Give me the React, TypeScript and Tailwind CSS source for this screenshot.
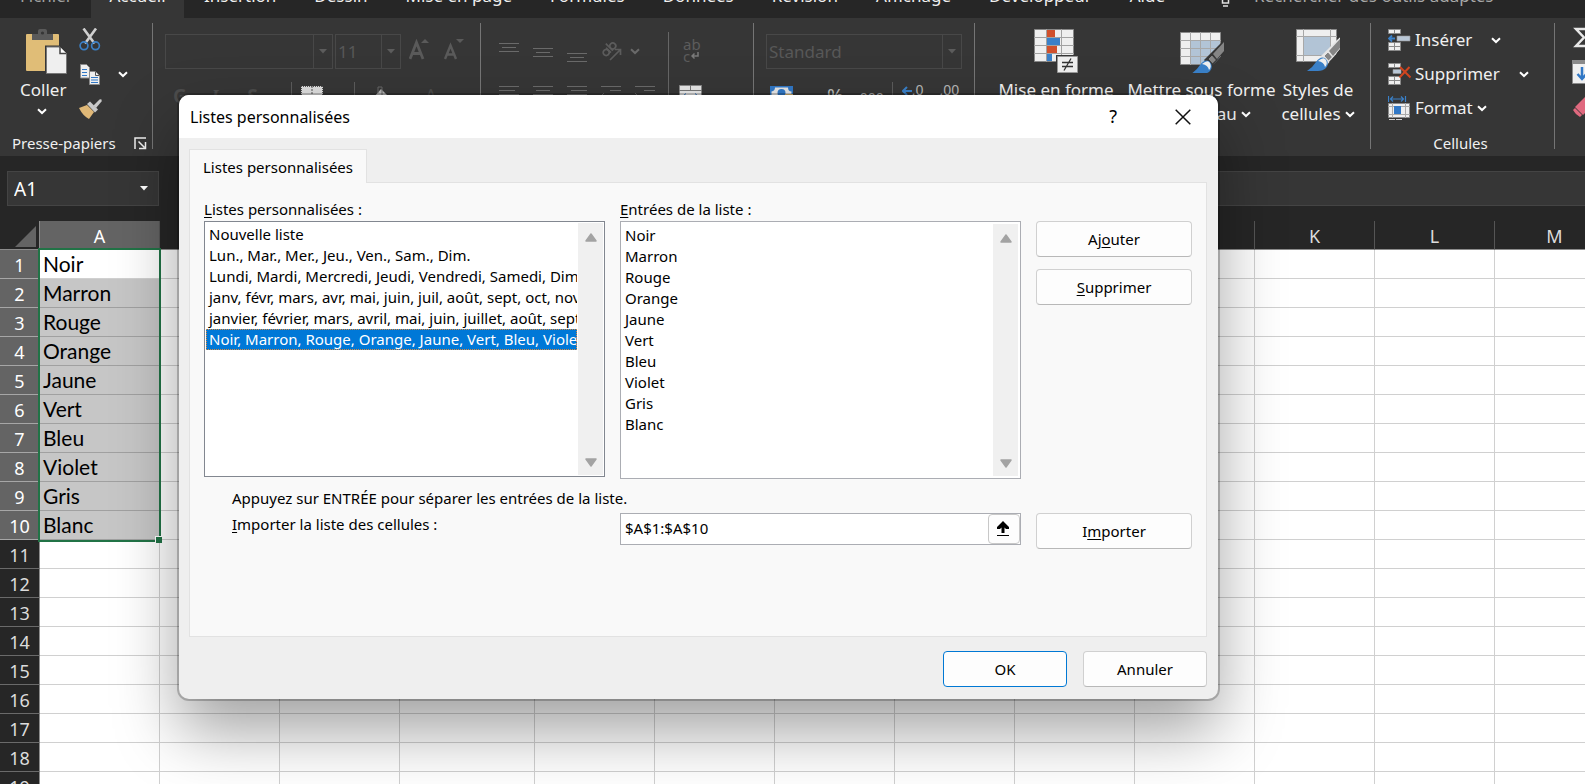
import React from "react";

const TABS = ["Insertion", "Dessin", "Mise en page", "Formules", "Données", "Révision", "Affichage", "Développeur", "Aide"];
const COLUMNS = ["A", "B", "C", "D", "E", "F", "G", "H", "I", "J", "K", "L", "M"];
const ROWS = Array.from({ length: 19 }, (_, i) => i + 1);
const COLORS = ["Noir", "Marron", "Rouge", "Orange", "Jaune", "Vert", "Bleu", "Violet", "Gris", "Blanc"];
const LISTS = [
  "Nouvelle liste",
  "Lun., Mar., Mer., Jeu., Ven., Sam., Dim.",
  "Lundi, Mardi, Mercredi, Jeudi, Vendredi, Samedi, Dimanche",
  "janv, févr, mars, avr, mai, juin, juil, août, sept, oct, nov, déc",
  "janvier, février, mars, avril, mai, juin, juillet, août, septembre, octobre",
  "Noir, Marron, Rouge, Orange, Jaune, Vert, Bleu, Violet, Gris, Blanc",
];

function Chevron({ className = "text-white" }: { className?: string }) {
  return (
    <svg width="10" height="7" viewBox="0 0 10 7" className={className} aria-hidden="true">
      <path d="M1 1.2 5 5l4-3.8" fill="none" stroke="currentColor" strokeWidth="2" />
    </svg>
  );
}

function Triangle({ className }: { className: string }) {
  return (
    <svg width="8" height="5" viewBox="0 0 8 5" className={className} aria-hidden="true">
      <path d="M0 0h8L4 4.6z" fill="currentColor" />
    </svg>
  );
}

function Divider() {
  return <div className="mt-[5px] h-[126px] w-px shrink-0 bg-[#757575]" />;
}

function PasteIcon() {
  return (
    <svg width="42" height="46" viewBox="0 0 42 46" aria-hidden="true">
      <rect x="0" y="5" width="33" height="37" rx="1" fill="#e0bd77" />
      <path d="M6 11V5h6V2q0-2 2-2h5q2 0 2 2v3h6v6z" fill="#5a5a5a" />
      <circle cx="16.500" cy="4" r="1.600" fill="#363636" />
      <path d="M19 16.500h15l7 7V45H19z" fill="#363636" />
      <path d="M20.500 18H34l6.500 6.500V44.500h-20z" fill="#efefef" stroke="#777" />
      <path d="M34 18v6.500h6.500" fill="#fff" stroke="#444" strokeWidth="1.500" />
    </svg>
  );
}

function CutIcon() {
  return (
    <svg width="22" height="23" viewBox="0 0 22 23" aria-hidden="true">
      <path d="m4.500.500 11 15M17 .500l-11 15" stroke="#cfcfcf" strokeWidth="2.600" />
      <g fill="none" stroke="#3b7fc4" strokeWidth="1.700">
        <circle cx="5" cy="17.800" r="3.900" />
        <circle cx="16.500" cy="17.800" r="3.900" />
      </g>
    </svg>
  );
}

function CopyIcon() {
  return (
    <svg width="22" height="23" viewBox="0 0 22 23" aria-hidden="true">
      <g fill="#efefef" stroke="#8a8a8a">
        <path d="M1.500 1.500h6l3 3V15h-9z" />
        <path d="M10.500 8.500h6l4 4v9h-10z" />
      </g>
      <path d="M3 6.500h5M3 9.500h5M3 12.500h5M12 14.500h7M12 17h7M12 19.500h7" stroke="#3178c6" strokeWidth="1.200" />
      <path d="M16.500 8.500v4h4" fill="none" stroke="#555" />
    </svg>
  );
}

function BrushIcon() {
  return (
    <svg width="24" height="22" viewBox="0 0 24 22" aria-hidden="true">
      <path d="m0 10 8-3 7 7-5 7q-6-3-10-11z" fill="#e0b877" />
      <path d="m8 6 3-2.500 8 8L16 14.500z" fill="#c9c9c9" />
      <path d="m14.500 7.500 6-6q3-1 2 2l-5.500 6.500z" fill="#c9c9c9" />
    </svg>
  );
}

function LauncherIcon() {
  return (
    <svg width="13" height="13" viewBox="0 0 13 13" fill="none" stroke="#f0f0f0" strokeWidth="1.500" aria-hidden="true">
      <path d="M1 12V1h11M4.500 4.500l6 6M11.500 5v6.500H5" />
    </svg>
  );
}

function Grow({ down }: { down?: boolean }) {
  return (
    <svg width="21" height="22" viewBox="0 0 21 22" aria-hidden="true" className="text-[#5a5a5a]">
      {down ? (
        <>
          <path d="m1 20 5.500-13.500L12 20M3 15.500h7" fill="none" stroke="currentColor" strokeWidth="2.400" />
          <path d="M12 0h8l-4 4z" fill="currentColor" />
        </>
      ) : (
        <>
          <path d="M1 20 7.500 3.500 14 20M3.500 14.500h8" fill="none" stroke="currentColor" strokeWidth="2.800" />
          <path d="M12 4h8l-4-4z" fill="currentColor" />
        </>
      )}
    </svg>
  );
}

function AlignIcon({ shift }: { shift: string }) {
  return (
    <svg width="20" height="22" viewBox="0 0 20 22" stroke="#6a6a6a" aria-hidden="true">
      <path d={shift} />
    </svg>
  );
}

function Orientation() {
  return (
    <svg width="22" height="22" viewBox="0 0 22 22" fill="none" stroke="#5c5c5c" strokeWidth="1.700" aria-hidden="true">
      <g transform="rotate(-45 8 9)">
        <circle cx="3.500" cy="9.500" r="3" />
        <path d="M6.800 6v7M9.500 3v10" />
        <circle cx="12.800" cy="9.500" r="3" />
      </g>
      <path d="M9 20 19 10M14 9.500h5.500V15" />
    </svg>
  );
}

function MergeIcon() {
  return (
    <svg width="23" height="22" viewBox="0 0 23 22" aria-hidden="true">
      <path d="M.500.500h22v21H.500z" fill="#e6e6e6" stroke="#888" />
      <path d="M0 5.500h23M11.500 0v5.500" stroke="#777" />
      <path d="M4 11h15M7 8.500 4 11l3 2.500M16 8.500l3 2.500-3 2.500" fill="none" stroke="#3178c6" />
    </svg>
  );
}

function ConditionalIcon() {
  return (
    <svg width="44" height="44" viewBox="0 0 44 44" aria-hidden="true">
      <path d="M.500.500h39v32H.500z" fill="#efefef" stroke="#888" />
      <path d="M0 8.500h40M0 16.500h40M0 24.500h40M12.500 0v33M27.500 0v33" stroke="#a2a2a2" />
      <path d="M13 1h8v7h-8zM13 17h10v7H13z" fill="#d0502c" />
      <path d="M13 9h13v7H13zM13 25h5v7h-5z" fill="#3a80c8" />
      <path d="M22 26h22v18H22z" fill="#363636" />
      <path d="M23.500 27.500h20v16h-20z" fill="#efefef" stroke="#999" />
      <path d="M28 33.500h11M28 37.500h11M37 29.500l-7 12" stroke="#333" strokeWidth="1.300" />
    </svg>
  );
}

function StyleIcon({ grid }: { grid?: boolean }) {
  return (
    <svg width="44" height="44" viewBox="0 0 44 44" aria-hidden="true">
      <g transform={grid ? "translate(0 3)" : undefined}>
        <path d="M.500.500h40v32H.500z" fill="#efefef" stroke="#8a8a8a" />
        {grid ? (
          <>
            <path d="M10 9h30v23H10z" fill="#b2c4d6" />
            <path d="M0 8.500h41M0 16.500h41M0 24.500h41M10.500 0v33M20.500 0v33M30.500 0v33" stroke="#a8a8a8" />
          </>
        ) : (
          <>
            <path d="M8 8h26v18H8z" fill="#b2c4d6" />
            <path d="M0 7.500h41M0 26.500h41M7.500 0v33M34.500 0v33" stroke="#a8a8a8" />
          </>
        )}
        <path d="M44 8 24 28l7 8 13-16z" fill={grid ? "#363636" : "#e6e6e6"} />
        <path d="M41 11l3-3v13l-11 12h11V7z" fill="#363636" />
        <path d="M44 10 33 22l4 5 7-8z" fill="#858585" />
        <path d="m32 23 4.500 5-4 4-4.500-5z" fill="#858585" stroke={grid ? "#363636" : "#e6e6e6"} />
        <path d="M11 42q6-4 9-9 4-6 9-4 5 5 1 10-3 3-8 3z" fill="#3a80c8" />
        <path d="M22 32q6-5 8-1t-1 7q-1-5-7-6z" fill="#efefef" />
      </g>
    </svg>
  );
}

function InsertIcon() {
  return (
    <svg width="23" height="23" viewBox="0 0 23 23" aria-hidden="true">
      <path d="M.500.500h12v4H.500zM.500 13.500h12v8H.500z" fill="#efefef" stroke="#8a8a8a" />
      <path d="M6.500 1v3.500M6.500 14v7.500M0 17.500h13" stroke="#8a8a8a" />
      <path d="M9 7h13v5H9z" fill="#b9c7d6" stroke="#999" strokeWidth=".6" />
      <path d="M7 9.500H1M4 6.500l-3 3 3 3" fill="none" stroke="#3a80c8" strokeWidth="1.800" />
    </svg>
  );
}

function DeleteIcon() {
  return (
    <svg width="23" height="23" viewBox="0 0 23 23" aria-hidden="true">
      <path d="M.500.500h12v4H.500zM.500 13.500h12v8H.500z" fill="#efefef" stroke="#8a8a8a" />
      <path d="M6.500 1v3.500M6.500 14v7.500M0 17.500h13" stroke="#8a8a8a" />
      <path d="M5 6.500h8v4H5z" fill="#b9c7d6" stroke="#999" strokeWidth=".6" />
      <path d="m12 4 10.500 10.500M21.500 4 11.500 14.500" stroke="#d0451f" strokeWidth="2" />
    </svg>
  );
}

function FormatIcon() {
  return (
    <svg width="23" height="25" viewBox="0 0 23 25" aria-hidden="true">
      <path d="M.500 0v6M17.500 0v6M2 3h14M5 .500 2.500 3 5 5.500M13 .500 15.500 3 13 5.500" fill="none" stroke="#3a80c8" strokeWidth="1.200" />
      <path d="M.500 7.500h21v14H.500z" fill="#efefef" stroke="#8a8a8a" />
      <path d="M4.500 7v15M17.500 7v15M0 10.500h22M0 18.500h22" stroke="#aaa" />
      <path d="M6 10h7v8H6z" fill="#3178c6" />
      <path d="M1 23.500h6M8 23.500h6" stroke="#cfcfcf" />
    </svg>
  );
}

function Combo({ label, value, width }: { label: string; value: string; width: string }) {
  return (
    <div className={`relative h-[35px] border border-[#484848] ${width}`}>
      <select aria-label={label} defaultValue={value} className="h-full w-full appearance-none bg-transparent pl-[2px] text-[17px] text-[#585858] outline-none">
        <option>{value}</option>
      </select>
      <span className="pointer-events-none absolute inset-y-0 right-0 flex w-[19px] items-center justify-center border-l border-[#484848]">
        <Triangle className="text-[#5c5c5c]" />
      </span>
    </div>
  );
}

function BigButton({ icon, lines, width }: { icon: React.ReactNode; lines: [string, string]; width: string }) {
  return (
    <button className={`flex shrink-0 flex-col items-center pt-[11px] whitespace-nowrap ${width}`}>
      {icon}
      <span className="mt-[5px] leading-6">{lines[0]}</span>
      <span className="flex items-center gap-1 leading-6">
        {lines[1]}
        <Chevron />
      </span>
    </button>
  );
}

function CellButton({ icon, text, gap }: { icon: React.ReactNode; text: string; gap: string }) {
  return (
    <button className={`flex h-[34px] items-center ${gap}`}>
      <span className="flex items-center gap-1">
        {icon}
        {text}
      </span>
      <Chevron />
    </button>
  );
}

function Ribbon() {
  return (
    <header className="shrink-0 overflow-hidden text-[17px] text-[#f0f0f0]">
      <nav className="flex h-[18px] items-end bg-[#262626] leading-6 whitespace-nowrap">
        <a href="#fichier" className="w-[91px] pb-[10px] pl-5 text-[#a0a0a0]">Fichier</a>
        <a href="#accueil" className="w-[93px] bg-[#363636] pb-[10px] text-center">Accueil</a>
        <div className="flex gap-[38px] pb-[10px] pl-5">
          {TABS.map((t) => (
            <a key={t} href="#ruban">{t}</a>
          ))}
        </div>
        <a href="#recherche" className="ml-14 flex items-end gap-6 text-[#a8a8a8]">
          <svg width="9" height="18" viewBox="0 0 9 18" className="mb-[11px]" aria-hidden="true">
            <path d="M1.500 6v8h6V6M2 17h5" fill="none" stroke="#e0e0e0" strokeWidth="1.500" />
          </svg>
          <span className="pb-[10px]">Rechercher des outils adaptés</span>
        </a>
      </nav>
      <div className="flex h-[138px] bg-[#363636]">
        <section aria-label="Presse-papiers" className="flex w-[152px] shrink-0 flex-col">
          <div className="flex h-[112px]">
            <button className="flex w-[67px] flex-col items-start pt-[11px] pl-5">
              <span className="ml-[6px]"><PasteIcon /></span>
              <span className="mt-[3px] leading-6">Coller</span>
              <span className="mt-[6px] ml-[17px]"><Chevron /></span>
            </button>
            <div className="flex flex-col gap-3 pt-[10px] pl-3">
              <button aria-label="Couper"><CutIcon /></button>
              <button aria-label="Copier" className="flex items-center gap-[17px]"><CopyIcon /><Chevron /></button>
              <button aria-label="Reproduire la mise en forme"><BrushIcon /></button>
            </div>
          </div>
          <div className="flex h-[26px] items-center justify-between pr-[5px] pl-3 text-[15px]">
            Presse-papiers
            <button aria-label="Options du Presse-papiers"><LauncherIcon /></button>
          </div>
        </section>
        <Divider />
        <section aria-label="Police" className="w-[327px] shrink-0 pt-4">
          <div className="flex items-center pl-3">
            <Combo label="Nom de police" value="" width="w-[168px]" />
            <div className="w-[2px]" />
            <Combo label="Taille de police" value="11" width="w-[66px]" />
            <div className="flex items-center gap-[14px] pb-1 pl-2">
              <Grow />
              <Grow down />
            </div>
          </div>
          <div className="flex h-10 items-start gap-[25px] pt-[13px] pl-5 text-[19px] leading-7 font-bold text-[#4c4c4c]">
            <span>G</span>
            <span className="font-serif italic">I</span>
            <span className="pl-1">S</span>
            <span className="ml-2 h-8 w-px bg-[#5c5c5c]" />
            <svg width="22" height="22" viewBox="0 0 22 22" className="-ml-4 mt-1" aria-hidden="true">
              <path d="M0 0h22v22H0z" fill="#dedede" />
              <path d="M0 .500h22M.500 0v22M21.500 0v22" stroke="#555" strokeDasharray="1 1" />
              <path d="M11 0v22" stroke="#555" strokeDasharray="2 1" />
              <path d="M0 9.500h22" stroke="#777" />
            </svg>
            <span className="ml-1.5 h-8 w-px bg-[#5c5c5c]" />
            <svg width="20" height="22" viewBox="0 0 20 22" className="-ml-2 mt-1" aria-hidden="true">
              <path d="m9 3 8 8-8 7-7-7z" fill="#b5b5b5" />
              <path d="M6 7V1h4v8" fill="none" stroke="#666" />
            </svg>
            <span className="ml-2 font-normal">A</span>
          </div>
        </section>
        <Divider />
        <section aria-label="Alignement" className="flex w-[272px] shrink-0">
          <div className="w-[187px]">
            <div className="flex h-[62px] items-center gap-[14px] pt-1 pl-[18px]">
              <AlignIcon shift="M0 3.500h20M3 7.500h14M0 11.500h20" />
              <AlignIcon shift="M0 8.500h20M3 12.500h14M0 16.500h20" />
              <AlignIcon shift="M0 13.500h20M3 17.500h14M0 21.500h20" />
              <div className="flex items-center gap-[7px]">
                <Orientation />
                <Chevron className="text-[#6a6a6a]" />
              </div>
            </div>
            <div className="flex gap-[14px] pt-[5px] pl-[18px]">
              <AlignIcon shift="M0 1.500h20M0 5.500h16M0 9.500h20" />
              <AlignIcon shift="M0 1.500h20M3 5.500h14M0 9.500h20" />
              <AlignIcon shift="M0 1.500h20M4 5.500h16M0 9.500h20" />
              <AlignIcon shift="M0 1.500h20M9 5.500h11M3 8 0 11" />
              <AlignIcon shift="M0 1.500h20M9 5.500h11M0 8l3 3" />
            </div>
          </div>
          <div className="mt-[14px] h-[90px] w-px bg-[#666]" />
          <div className="flex flex-col pt-5 pl-[10px]">
            <div className="flex h-[47px] flex-col pl-1 text-[15px] leading-3 text-[#5c5c5c]">
              <span>ab</span>
              <span className="flex items-center gap-px">
                c
                <svg width="8" height="8" viewBox="0 0 8 8" aria-hidden="true">
                  <path d="M7 0v4H1M3.500 1.500 1 4l2.500 2.500" fill="none" stroke="#7a7a7a" strokeWidth="1.500" />
                </svg>
              </span>
            </div>
            <MergeIcon />
          </div>
        </section>
        <Divider />
        <section aria-label="Nombre" className="w-[220px] shrink-0 pt-4">
          <div className="px-3">
            <Combo label="Format de nombre" value="Standard" width="w-full" />
          </div>
          <div className="flex items-start pt-[13px] pl-4 text-[14px] leading-4 text-[#b8b8b8]">
            <svg width="23" height="20" viewBox="0 0 23 20" className="mt-1" aria-hidden="true">
              <path d="M0 0h23v16H0z" fill="#3178c6" />
              <path d="M5 1.500h13q0 4 3.500 4V12h-20V5.500Q5 5 5 1.500z" fill="#e6e6e6" />
              <circle cx="11.500" cy="7" r="4" fill="#3178c6" />
              <path d="M15 8h8v12h-8z" fill="#e0bd77" />
            </svg>
            <span className="pt-1.5 pl-[34px] text-[20px]">%</span>
            <span className="pt-2 pl-4">000</span>
            <span className="ml-2 h-8 w-px bg-[#5c5c5c]" />
            <svg width="10" height="10" viewBox="0 0 10 10" className="mt-1 ml-[9px]" aria-hidden="true">
              <path d="M10 5H1M5 1 1 5l4 4" fill="none" stroke="#3a80c8" strokeWidth="2" />
            </svg>
            <span>,0</span>
            <span className="pl-4">,00</span>
          </div>
        </section>
        <Divider />
        <section aria-label="Styles" className="flex w-[395px] shrink-0 pl-[18px]">
          <BigButton icon={<ConditionalIcon />} lines={["Mise en forme", "conditionnelle"]} width="w-[126px]" />
          <BigButton icon={<StyleIcon grid />} lines={["Mettre sous forme", "de tableau"]} width="w-[165px]" />
          <BigButton icon={<StyleIcon />} lines={["Styles de", "cellules"]} width="w-[68px]" />
        </section>
        <Divider />
        <section aria-label="Cellules" className="flex w-[183px] shrink-0 flex-col">
          <div className="flex h-[112px] flex-col items-start pt-[5px] pl-[17px]">
            <CellButton icon={<InsertIcon />} text="Insérer" gap="gap-[19px]" />
            <CellButton icon={<DeleteIcon />} text="Supprimer" gap="gap-[19px]" />
            <CellButton icon={<FormatIcon />} text="Format" gap="gap-1" />
          </div>
          <div className="flex h-[26px] items-center justify-center pr-1 text-[15px]">Cellules</div>
        </section>
        <Divider />
        <section aria-label="Édition" className="flex shrink-0 flex-col gap-3 pt-[9px] pl-[17px]">
          <svg width="22" height="21" viewBox="0 0 22 21" aria-hidden="true">
            <path d="M18 2H4l8 8.500L4 19h14" fill="none" stroke="#e8e8e8" strokeWidth="2.500" />
          </svg>
          <svg width="24" height="24" viewBox="0 0 24 24" aria-hidden="true">
            <path d="M.500.500h23v23H.500z" fill="#efefef" stroke="#8a8a8a" />
            <path d="M0 0h24v4H0z" fill="#8a8a8a" />
            <path d="M10 7v12M5.500 14l4.500 5 4.500-5" fill="none" stroke="#3178c6" strokeWidth="2.500" />
          </svg>
          <svg width="24" height="22" viewBox="0 0 24 22" aria-hidden="true">
            <path d="M14 0 3 11l8 8L22 8z" fill="#e0697f" />
            <path d="m1 14 2-2 7 7-2 2q-5-3-7-7z" fill="#e0697f" />
          </svg>
        </section>
      </div>
    </header>
  );
}

function FormulaBar() {
  return (
    <div className="flex h-[65px] shrink-0 items-center gap-8 bg-[#262626] pl-[7px]">
      <div className="flex h-[35px] w-[152px] shrink-0 items-center justify-between border border-[#444] bg-[#363636] pr-2.5">
        <input aria-label="Zone Nom" defaultValue="A1" className="w-24 bg-transparent pt-0.5 pl-1.5 text-[19px] text-white outline-none" />
        <Triangle className="text-white" />
      </div>
      <input aria-label="Barre de formule" className="h-[35px] grow border border-r-0 border-[#444] bg-[#363636] text-white outline-none" />
    </div>
  );
}

function Sheet() {
  return (
    <div className="relative grow overflow-hidden bg-white">
      <table className="w-[1614px] table-fixed border-separate border-spacing-0">
        <colgroup>
          <col className="w-10" />
          {COLUMNS.map((c) => (
            <col key={c} className={c === "D" ? "w-[135px]" : "w-[120px]"} />
          ))}
        </colgroup>
        <thead>
          <tr className="h-[29px] bg-[#262626] text-[18px] leading-6 text-[#dcdcdc]">
            <th className="border-r border-b border-[#8c8c8c] p-0">
              <svg width="36" height="26" viewBox="0 0 36 26" aria-hidden="true">
                <path d="M36 4v21H15z" fill="#646464" />
              </svg>
            </th>
            {COLUMNS.map((c) => (
              <th key={c} scope="col" className={`border-r border-b border-r-[#555] border-b-[#8c8c8c] p-0 pt-0.5 font-normal ${c === "A" ? "bg-[#646464] text-white" : ""}`}>
                {c}
              </th>
            ))}
          </tr>
        </thead>
        <tbody>
          {ROWS.map((r) => (
            <tr key={r} className="h-[29px]">
              <th scope="row" className={`border-r border-b p-0 pt-px text-[18px] leading-6 font-normal ${r <= 10 ? "border-[#a6a6a6] bg-[#646464] text-white" : "border-r-[#8c8c8c] border-b-[#6a6a6a] bg-[#262626] text-[#dcdcdc]"}`}>
                {r}
              </th>
              {COLUMNS.map((c) => {
                const picked = c === "A" && r <= 10;
                return (
                  <td key={c} className={`border-r border-b p-0 pl-[3px] font-[Lato,'Noto_Sans',sans-serif] text-[21px] leading-6 text-black ${picked && r > 1 ? "border-[#a0a0a0] bg-[#c6c6c6]" : "border-[#d0d0d0]"}`}>
                    {picked ? COLORS[r - 1] : ""}
                  </td>
                );
              })}
            </tr>
          ))}
        </tbody>
      </table>
      <div className="absolute top-[27px] left-[38px] h-[294px] w-[123px] border-2 border-[#217346]">
        <div className="absolute -right-[3px] -bottom-[3px] size-[7px] border-t border-l border-white bg-[#217346]" />
      </div>
    </div>
  );
}

function Scrollbar() {
  return (
    <div className="flex w-[25px] shrink-0 flex-col items-center justify-between bg-[#f0f0f0] pt-[10px] pb-[8px]">
      <button aria-label="Défiler vers le haut">
        <svg width="12" height="9" viewBox="0 0 12 9" aria-hidden="true">
          <path d="M6 1 11 8H1z" fill="#a3a3a3" stroke="#a3a3a3" strokeWidth="1.500" strokeLinejoin="round" />
        </svg>
      </button>
      <button aria-label="Défiler vers le bas">
        <svg width="12" height="9" viewBox="0 0 12 9" aria-hidden="true">
          <path d="M6 8 1 1h10z" fill="#a3a3a3" stroke="#a3a3a3" strokeWidth="1.500" strokeLinejoin="round" />
        </svg>
      </button>
    </div>
  );
}

const push = "h-9 rounded-[4px] border border-[#d0d0d0] border-b-[#b8b8b8] bg-[#fdfdfd]";

function Dialog() {
  return (
    <div
      role="dialog"
      aria-labelledby="titre"
      className="absolute top-[95px] left-[179px] w-[1039px] overflow-hidden rounded-[10px] bg-[#efefef] text-[15px] text-black shadow-[0_0_0_2px_rgba(0,0,0,0.22),0_32px_64px_rgba(0,0,0,0.37)]"
    >
      <div className="flex h-[43px] items-center bg-white pr-[27px] pl-[11px]">
        <h1 id="titre" className="grow text-[16px]">Listes personnalisées</h1>
        <button aria-label="Aide" className="mr-[58px] text-[18px]">?</button>
        <button aria-label="Fermer">
          <svg width="16" height="16" viewBox="0 0 16 16" aria-hidden="true">
            <path d="m.700.700 14.600 14.600M15.300.700.700 15.300" stroke="#111" strokeWidth="1.500" />
          </svg>
        </button>
      </div>
      <div className="pt-[11px] pr-[11px] pb-3 pl-[10px]">
        <div role="tablist" className="flex">
          <button role="tab" aria-selected="true" className="relative z-10 -mb-px h-[34px] border border-b-0 border-[#e2e2e2] bg-[#f9f9f9] px-[13px] pt-0.5">
            Listes personnalisées
          </button>
        </div>
        <div role="tabpanel" className="min-h-[455px] border border-[#e2e2e2] bg-[#f9f9f9] px-[14px] pt-[14px]">
          <div className="grid grid-cols-[401fr_401fr_156fr] gap-x-[15px]">
            <div id="listes" className="h-6 leading-6"><u className="underline-offset-2">L</u>istes personnalisées :</div>
            <label htmlFor="entrees" className="h-6 leading-6"><u className="underline-offset-2">E</u>ntrées de la liste :</label>
            <div />
            <div className="flex h-[256px] min-w-0 border border-[#828790] bg-white py-px pr-px">
              <ul role="listbox" aria-labelledby="listes" className="min-w-0 grow overflow-hidden pt-px pr-px pl-px">
                {LISTS.map((l, i) => (
                  <li
                    key={l}
                    role="option"
                    aria-selected={i === 5}
                    className={`h-[21px] overflow-hidden pl-[3px] leading-[21px] whitespace-nowrap ${i === 5 ? "bg-[#0078d7] text-white outline-1 -outline-offset-1 outline-[#e08a3c] outline-dotted" : ""}`}
                  >
                    {l}
                  </li>
                ))}
              </ul>
              <Scrollbar />
            </div>
            <div className="flex h-[258px] border border-[#abadb3] bg-white py-0.5 pr-0.5">
              <textarea id="entrees" defaultValue={COLORS.join("\n")} className="min-w-0 grow resize-none overflow-hidden pt-px pl-1 leading-[21px] outline-none" />
              <Scrollbar />
            </div>
            <div className="flex flex-col gap-3">
              <button className={push}>Aj<u className="underline-offset-2">o</u>uter</button>
              <button className={push}><u className="underline-offset-2">S</u>upprimer</button>
            </div>
          </div>
          <p className="mt-[7px] h-[27px] pl-7 leading-6">Appuyez sur ENTRÉE pour séparer les entrées de la liste.</p>
          <div className="grid grid-cols-[401fr_401fr_156fr] items-start gap-x-[15px]">
            <label htmlFor="plage" className="pl-7 leading-[22px]"><u className="underline-offset-2">I</u>mporter la liste des cellules :</label>
            <div className="flex h-8 border border-[#abadb3] bg-white">
              <input id="plage" defaultValue="$A$1:$A$10" className="min-w-0 grow bg-transparent pb-0.5 pl-1 outline-none" />
              <button aria-label="Réduire la boîte de dialogue" className="flex w-8 items-center justify-center rounded-[4px] border border-[#c8c8c8] bg-[#fdfdfd]">
                <svg width="12" height="15" viewBox="0 0 12 15" className="mr-0.5 mb-0.5" aria-hidden="true">
                  <path d="M6 0 0 6v2h3l1.500-1.500V12h3V6.500L9 8h3V6zM0 14h12v1H0z" fill="#000" />
                </svg>
              </button>
            </div>
            <button className={push}><span>I<u className="underline-offset-2">m</u>porter</span></button>
          </div>
        </div>
        <div className="mt-[14px] flex justify-end gap-4">
          <button className="h-9 w-[124px] rounded-[4px] border border-[#0078d4] bg-[#fdfdfd]">OK</button>
          <button className={`w-[124px] ${push}`}>Annuler</button>
        </div>
      </div>
    </div>
  );
}

export default function App() {
  return (
    <div className="relative flex h-screen flex-col overflow-hidden bg-[#262626] font-['Noto_Sans',sans-serif]">
      <Ribbon />
      <FormulaBar />
      <Sheet />
      <Dialog />
    </div>
  );
}
